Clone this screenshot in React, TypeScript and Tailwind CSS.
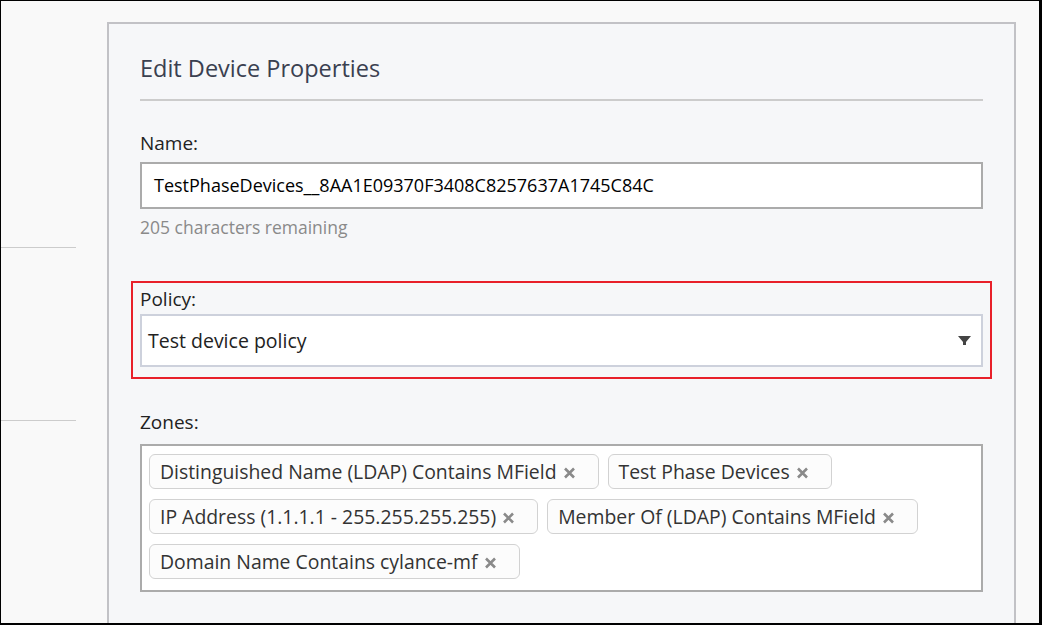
import React from 'react';

const ZONES = [
  'Distinguished Name (LDAP) Contains MField',
  'Test Phase Devices',
  'IP Address (1.1.1.1 - 255.255.255.255)',
  'Member Of (LDAP) Contains MField',
  'Domain Name Contains cylance-mf',
];

const ZoneTag: React.FC<{ label: string }> = ({ label }) => (
  <span className="flex h-[35px] items-center gap-[6px] rounded-[6px] border border-[#d2d2d2] bg-[#fcfcfc] pl-[10px] pr-[22px] text-[19.4px] text-[#333]">
    {label}
    <svg width="13" height="12" viewBox="0 0 13 12" className="mt-[3px]">
      <path d="M2 1.5 L11 10.5 M11 1.5 L2 10.5" stroke="#8a8a8a" strokeWidth="2.6" />
    </svg>
  </span>
);

export default function App() {
  return (
    <div
      className="flex h-[625px] w-[1042px] overflow-hidden border-t border-l border-r-[3px] border-b-[2px] border-black bg-[#f9f9f9]"
      style={{ fontFamily: '"Open Sans", "Noto Sans", sans-serif' }}
    >
      {/* left column stub */}
      <div className="w-[75px] shrink-0">
        <div className="mt-[246px] h-px bg-[#cccccc]" />
        <div className="mt-[172px] h-px bg-[#cccccc]" />
      </div>

      <div className="ml-[31px] mt-[21px] w-[909px] shrink-0 border-x-2 border-t-2 border-[#c2c2c6] bg-[#f6f7f9] px-[31px]">
        <h2 className="pt-[29px] text-[23.5px] leading-[30px] text-[#3a4050]">Edit Device Properties</h2>
        <div className="mt-[16px] h-[2px] bg-[#cccccc]" />

        <div className="mt-[31px] text-[19px] leading-[22px] text-[#222]">Name:</div>
        <div className="mt-[8px] flex h-[47px] items-center border-2 border-[#ababab] bg-white px-[12px] text-[18px] text-black">
          TestPhaseDevices__8AA1E09370F3408C8257637A1745C84C
        </div>
        <div className="mt-[8px] text-[17.5px] leading-[20px] text-[#8a8a8a]">205 characters remaining</div>

        <div className="-mx-[9px] mt-[44px] border-2 border-[#e8202a] px-[7px] pb-[10px] pt-[5px]">
          <div className="text-[19px] leading-[22px] text-[#222]">Policy:</div>
          <div className="mt-[4px] flex h-[53px] items-center justify-between border-2 border-[#cdd1dc] bg-white pl-[6px] pr-[10px] text-[19.5px] text-[#222]">
            <span>Test device policy</span>
            <svg width="13" height="10" viewBox="0 0 13 10" className="mt-[1px]">
              <path d="M0 0 H13 L8 6 V9 H5 V6 Z" fill="#444" />
            </svg>
          </div>
        </div>

        <div className="mt-[32px] text-[19px] leading-[22px] text-[#222]">Zones:</div>
        <div className="mt-[11px] flex h-[148px] flex-wrap content-start gap-x-[9px] gap-y-[10px] border-2 border-[#ababab] bg-white px-[7px] py-[8px]">
          {ZONES.map(z => (
            <ZoneTag key={z} label={z} />
          ))}
        </div>
      </div>
    </div>
  );
}
